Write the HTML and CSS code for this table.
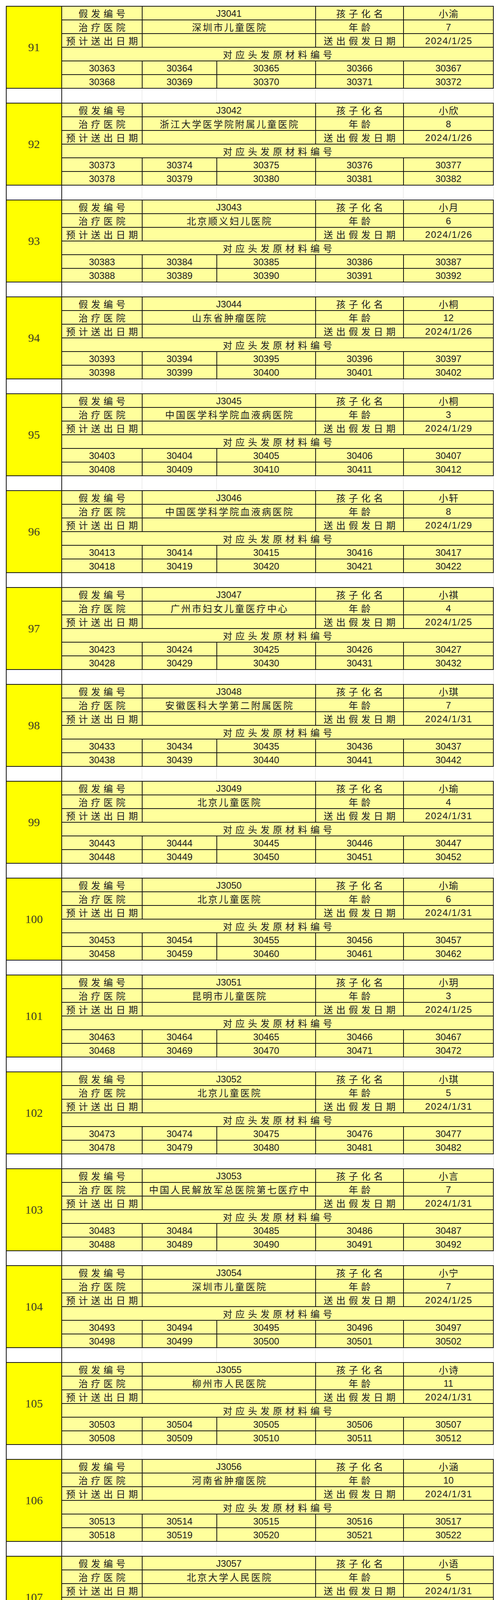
FILE: index.html
```html
<!DOCTYPE html>
<html lang="zh-CN">
<head>
<meta charset="utf-8">
<title>假发编号表</title>
<link rel="stylesheet" href="styles.css">
</head>
<body>
<main class="sheet">

<section class="block">
  <div class="idx">91</div>
  <div class="c lbl">假发编号</div><div class="c num span2">J3041</div><div class="c lbl">孩子化名</div><div class="c name">小渝</div>
  <div class="c lbl">治疗医院</div><div class="c hosp span2">深圳市儿童医院</div><div class="c lbl">年龄</div><div class="c num">7</div>
  <div class="c lbl">预计送出日期</div><div class="c span2"></div><div class="c lbl">送出假发日期</div><div class="c num date">2024/1/25</div>
  <div class="c lbl span5">对应头发原材料编号</div>
  <div class="c num">30363</div><div class="c num">30364</div><div class="c num">30365</div><div class="c num">30366</div><div class="c num">30367</div>
  <div class="c num">30368</div><div class="c num">30369</div><div class="c num">30370</div><div class="c num">30371</div><div class="c num">30372</div>
</section>
<div class="spacer"><i></i><i></i><i></i><i></i><i></i><i></i></div>

<section class="block">
  <div class="idx">92</div>
  <div class="c lbl">假发编号</div><div class="c num span2">J3042</div><div class="c lbl">孩子化名</div><div class="c name">小欣</div>
  <div class="c lbl">治疗医院</div><div class="c hosp span2">浙江大学医学院附属儿童医院</div><div class="c lbl">年龄</div><div class="c num">8</div>
  <div class="c lbl">预计送出日期</div><div class="c span2"></div><div class="c lbl">送出假发日期</div><div class="c num date">2024/1/26</div>
  <div class="c lbl span5">对应头发原材料编号</div>
  <div class="c num">30373</div><div class="c num">30374</div><div class="c num">30375</div><div class="c num">30376</div><div class="c num">30377</div>
  <div class="c num">30378</div><div class="c num">30379</div><div class="c num">30380</div><div class="c num">30381</div><div class="c num">30382</div>
</section>
<div class="spacer"><i></i><i></i><i></i><i></i><i></i><i></i></div>

<section class="block">
  <div class="idx">93</div>
  <div class="c lbl">假发编号</div><div class="c num span2">J3043</div><div class="c lbl">孩子化名</div><div class="c name">小月</div>
  <div class="c lbl">治疗医院</div><div class="c hosp span2">北京顺义妇儿医院</div><div class="c lbl">年龄</div><div class="c num">6</div>
  <div class="c lbl">预计送出日期</div><div class="c span2"></div><div class="c lbl">送出假发日期</div><div class="c num date">2024/1/26</div>
  <div class="c lbl span5">对应头发原材料编号</div>
  <div class="c num">30383</div><div class="c num">30384</div><div class="c num">30385</div><div class="c num">30386</div><div class="c num">30387</div>
  <div class="c num">30388</div><div class="c num">30389</div><div class="c num">30390</div><div class="c num">30391</div><div class="c num">30392</div>
</section>
<div class="spacer"><i></i><i></i><i></i><i></i><i></i><i></i></div>

<section class="block">
  <div class="idx">94</div>
  <div class="c lbl">假发编号</div><div class="c num span2">J3044</div><div class="c lbl">孩子化名</div><div class="c name">小桐</div>
  <div class="c lbl">治疗医院</div><div class="c hosp span2">山东省肿瘤医院</div><div class="c lbl">年龄</div><div class="c num">12</div>
  <div class="c lbl">预计送出日期</div><div class="c span2"></div><div class="c lbl">送出假发日期</div><div class="c num date">2024/1/26</div>
  <div class="c lbl span5">对应头发原材料编号</div>
  <div class="c num">30393</div><div class="c num">30394</div><div class="c num">30395</div><div class="c num">30396</div><div class="c num">30397</div>
  <div class="c num">30398</div><div class="c num">30399</div><div class="c num">30400</div><div class="c num">30401</div><div class="c num">30402</div>
</section>
<div class="spacer"><i></i><i></i><i></i><i></i><i></i><i></i></div>

<section class="block">
  <div class="idx">95</div>
  <div class="c lbl">假发编号</div><div class="c num span2">J3045</div><div class="c lbl">孩子化名</div><div class="c name">小桐</div>
  <div class="c lbl">治疗医院</div><div class="c hosp span2">中国医学科学院血液病医院</div><div class="c lbl">年龄</div><div class="c num">3</div>
  <div class="c lbl">预计送出日期</div><div class="c span2"></div><div class="c lbl">送出假发日期</div><div class="c num date">2024/1/29</div>
  <div class="c lbl span5">对应头发原材料编号</div>
  <div class="c num">30403</div><div class="c num">30404</div><div class="c num">30405</div><div class="c num">30406</div><div class="c num">30407</div>
  <div class="c num">30408</div><div class="c num">30409</div><div class="c num">30410</div><div class="c num">30411</div><div class="c num">30412</div>
</section>
<div class="spacer"><i></i><i></i><i></i><i></i><i></i><i></i></div>

<section class="block">
  <div class="idx">96</div>
  <div class="c lbl">假发编号</div><div class="c num span2">J3046</div><div class="c lbl">孩子化名</div><div class="c name">小轩</div>
  <div class="c lbl">治疗医院</div><div class="c hosp span2">中国医学科学院血液病医院</div><div class="c lbl">年龄</div><div class="c num">8</div>
  <div class="c lbl">预计送出日期</div><div class="c span2"></div><div class="c lbl">送出假发日期</div><div class="c num date">2024/1/29</div>
  <div class="c lbl span5">对应头发原材料编号</div>
  <div class="c num">30413</div><div class="c num">30414</div><div class="c num">30415</div><div class="c num">30416</div><div class="c num">30417</div>
  <div class="c num">30418</div><div class="c num">30419</div><div class="c num">30420</div><div class="c num">30421</div><div class="c num">30422</div>
</section>
<div class="spacer"><i></i><i></i><i></i><i></i><i></i><i></i></div>

<section class="block">
  <div class="idx">97</div>
  <div class="c lbl">假发编号</div><div class="c num span2">J3047</div><div class="c lbl">孩子化名</div><div class="c name">小祺</div>
  <div class="c lbl">治疗医院</div><div class="c hosp span2">广州市妇女儿童医疗中心</div><div class="c lbl">年龄</div><div class="c num">4</div>
  <div class="c lbl">预计送出日期</div><div class="c span2"></div><div class="c lbl">送出假发日期</div><div class="c num date">2024/1/25</div>
  <div class="c lbl span5">对应头发原材料编号</div>
  <div class="c num">30423</div><div class="c num">30424</div><div class="c num">30425</div><div class="c num">30426</div><div class="c num">30427</div>
  <div class="c num">30428</div><div class="c num">30429</div><div class="c num">30430</div><div class="c num">30431</div><div class="c num">30432</div>
</section>
<div class="spacer"><i></i><i></i><i></i><i></i><i></i><i></i></div>

<section class="block">
  <div class="idx">98</div>
  <div class="c lbl">假发编号</div><div class="c num span2">J3048</div><div class="c lbl">孩子化名</div><div class="c name">小琪</div>
  <div class="c lbl">治疗医院</div><div class="c hosp span2">安徽医科大学第二附属医院</div><div class="c lbl">年龄</div><div class="c num">7</div>
  <div class="c lbl">预计送出日期</div><div class="c span2"></div><div class="c lbl">送出假发日期</div><div class="c num date">2024/1/31</div>
  <div class="c lbl span5">对应头发原材料编号</div>
  <div class="c num">30433</div><div class="c num">30434</div><div class="c num">30435</div><div class="c num">30436</div><div class="c num">30437</div>
  <div class="c num">30438</div><div class="c num">30439</div><div class="c num">30440</div><div class="c num">30441</div><div class="c num">30442</div>
</section>
<div class="spacer"><i></i><i></i><i></i><i></i><i></i><i></i></div>

<section class="block">
  <div class="idx">99</div>
  <div class="c lbl">假发编号</div><div class="c num span2">J3049</div><div class="c lbl">孩子化名</div><div class="c name">小瑜</div>
  <div class="c lbl">治疗医院</div><div class="c hosp span2">北京儿童医院</div><div class="c lbl">年龄</div><div class="c num">4</div>
  <div class="c lbl">预计送出日期</div><div class="c span2"></div><div class="c lbl">送出假发日期</div><div class="c num date">2024/1/31</div>
  <div class="c lbl span5">对应头发原材料编号</div>
  <div class="c num">30443</div><div class="c num">30444</div><div class="c num">30445</div><div class="c num">30446</div><div class="c num">30447</div>
  <div class="c num">30448</div><div class="c num">30449</div><div class="c num">30450</div><div class="c num">30451</div><div class="c num">30452</div>
</section>
<div class="spacer"><i></i><i></i><i></i><i></i><i></i><i></i></div>

<section class="block">
  <div class="idx">100</div>
  <div class="c lbl">假发编号</div><div class="c num span2">J3050</div><div class="c lbl">孩子化名</div><div class="c name">小瑜</div>
  <div class="c lbl">治疗医院</div><div class="c hosp span2">北京儿童医院</div><div class="c lbl">年龄</div><div class="c num">6</div>
  <div class="c lbl">预计送出日期</div><div class="c span2"></div><div class="c lbl">送出假发日期</div><div class="c num date">2024/1/31</div>
  <div class="c lbl span5">对应头发原材料编号</div>
  <div class="c num">30453</div><div class="c num">30454</div><div class="c num">30455</div><div class="c num">30456</div><div class="c num">30457</div>
  <div class="c num">30458</div><div class="c num">30459</div><div class="c num">30460</div><div class="c num">30461</div><div class="c num">30462</div>
</section>
<div class="spacer"><i></i><i></i><i></i><i></i><i></i><i></i></div>

<section class="block">
  <div class="idx">101</div>
  <div class="c lbl">假发编号</div><div class="c num span2">J3051</div><div class="c lbl">孩子化名</div><div class="c name">小玥</div>
  <div class="c lbl">治疗医院</div><div class="c hosp span2">昆明市儿童医院</div><div class="c lbl">年龄</div><div class="c num">3</div>
  <div class="c lbl">预计送出日期</div><div class="c span2"></div><div class="c lbl">送出假发日期</div><div class="c num date">2024/1/25</div>
  <div class="c lbl span5">对应头发原材料编号</div>
  <div class="c num">30463</div><div class="c num">30464</div><div class="c num">30465</div><div class="c num">30466</div><div class="c num">30467</div>
  <div class="c num">30468</div><div class="c num">30469</div><div class="c num">30470</div><div class="c num">30471</div><div class="c num">30472</div>
</section>
<div class="spacer"><i></i><i></i><i></i><i></i><i></i><i></i></div>

<section class="block">
  <div class="idx">102</div>
  <div class="c lbl">假发编号</div><div class="c num span2">J3052</div><div class="c lbl">孩子化名</div><div class="c name">小琪</div>
  <div class="c lbl">治疗医院</div><div class="c hosp span2">北京儿童医院</div><div class="c lbl">年龄</div><div class="c num">5</div>
  <div class="c lbl">预计送出日期</div><div class="c span2"></div><div class="c lbl">送出假发日期</div><div class="c num date">2024/1/31</div>
  <div class="c lbl span5">对应头发原材料编号</div>
  <div class="c num">30473</div><div class="c num">30474</div><div class="c num">30475</div><div class="c num">30476</div><div class="c num">30477</div>
  <div class="c num">30478</div><div class="c num">30479</div><div class="c num">30480</div><div class="c num">30481</div><div class="c num">30482</div>
</section>
<div class="spacer"><i></i><i></i><i></i><i></i><i></i><i></i></div>

<section class="block">
  <div class="idx">103</div>
  <div class="c lbl">假发编号</div><div class="c num span2">J3053</div><div class="c lbl">孩子化名</div><div class="c name">小言</div>
  <div class="c lbl">治疗医院</div><div class="c hosp span2">中国人民解放军总医院第七医疗中</div><div class="c lbl">年龄</div><div class="c num">7</div>
  <div class="c lbl">预计送出日期</div><div class="c span2"></div><div class="c lbl">送出假发日期</div><div class="c num date">2024/1/31</div>
  <div class="c lbl span5">对应头发原材料编号</div>
  <div class="c num">30483</div><div class="c num">30484</div><div class="c num">30485</div><div class="c num">30486</div><div class="c num">30487</div>
  <div class="c num">30488</div><div class="c num">30489</div><div class="c num">30490</div><div class="c num">30491</div><div class="c num">30492</div>
</section>
<div class="spacer"><i></i><i></i><i></i><i></i><i></i><i></i></div>

<section class="block">
  <div class="idx">104</div>
  <div class="c lbl">假发编号</div><div class="c num span2">J3054</div><div class="c lbl">孩子化名</div><div class="c name">小宁</div>
  <div class="c lbl">治疗医院</div><div class="c hosp span2">深圳市儿童医院</div><div class="c lbl">年龄</div><div class="c num">7</div>
  <div class="c lbl">预计送出日期</div><div class="c span2"></div><div class="c lbl">送出假发日期</div><div class="c num date">2024/1/25</div>
  <div class="c lbl span5">对应头发原材料编号</div>
  <div class="c num">30493</div><div class="c num">30494</div><div class="c num">30495</div><div class="c num">30496</div><div class="c num">30497</div>
  <div class="c num">30498</div><div class="c num">30499</div><div class="c num">30500</div><div class="c num">30501</div><div class="c num">30502</div>
</section>
<div class="spacer"><i></i><i></i><i></i><i></i><i></i><i></i></div>

<section class="block">
  <div class="idx">105</div>
  <div class="c lbl">假发编号</div><div class="c num span2">J3055</div><div class="c lbl">孩子化名</div><div class="c name">小诗</div>
  <div class="c lbl">治疗医院</div><div class="c hosp span2">柳州市人民医院</div><div class="c lbl">年龄</div><div class="c num">11</div>
  <div class="c lbl">预计送出日期</div><div class="c span2"></div><div class="c lbl">送出假发日期</div><div class="c num date">2024/1/31</div>
  <div class="c lbl span5">对应头发原材料编号</div>
  <div class="c num">30503</div><div class="c num">30504</div><div class="c num">30505</div><div class="c num">30506</div><div class="c num">30507</div>
  <div class="c num">30508</div><div class="c num">30509</div><div class="c num">30510</div><div class="c num">30511</div><div class="c num">30512</div>
</section>
<div class="spacer"><i></i><i></i><i></i><i></i><i></i><i></i></div>

<section class="block">
  <div class="idx">106</div>
  <div class="c lbl">假发编号</div><div class="c num span2">J3056</div><div class="c lbl">孩子化名</div><div class="c name">小涵</div>
  <div class="c lbl">治疗医院</div><div class="c hosp span2">河南省肿瘤医院</div><div class="c lbl">年龄</div><div class="c num">10</div>
  <div class="c lbl">预计送出日期</div><div class="c span2"></div><div class="c lbl">送出假发日期</div><div class="c num date">2024/1/31</div>
  <div class="c lbl span5">对应头发原材料编号</div>
  <div class="c num">30513</div><div class="c num">30514</div><div class="c num">30515</div><div class="c num">30516</div><div class="c num">30517</div>
  <div class="c num">30518</div><div class="c num">30519</div><div class="c num">30520</div><div class="c num">30521</div><div class="c num">30522</div>
</section>
<div class="spacer"><i></i><i></i><i></i><i></i><i></i><i></i></div>

<section class="block">
  <div class="idx">107</div>
  <div class="c lbl">假发编号</div><div class="c num span2">J3057</div><div class="c lbl">孩子化名</div><div class="c name">小语</div>
  <div class="c lbl">治疗医院</div><div class="c hosp span2">北京大学人民医院</div><div class="c lbl">年龄</div><div class="c num">5</div>
  <div class="c lbl">预计送出日期</div><div class="c span2"></div><div class="c lbl">送出假发日期</div><div class="c num date">2024/1/31</div>
  <div class="c lbl span5">对应头发原材料编号</div>
  <div class="c num">30523</div><div class="c num">30524</div><div class="c num">30525</div><div class="c num">30526</div><div class="c num">30527</div>
  <div class="c num">30528</div><div class="c num">30529</div><div class="c num">30530</div><div class="c num">30531</div><div class="c num">30532</div>
</section>
<div class="spacer"><i></i><i></i><i></i><i></i><i></i><i></i></div>

<section class="block">
  <div class="idx">108</div>
  <div class="c lbl">假发编号</div><div class="c num span2">J3058</div><div class="c lbl">孩子化名</div><div class="c name">小颖</div>
  <div class="c lbl">治疗医院</div><div class="c hosp span2">北京儿童医院</div><div class="c lbl">年龄</div><div class="c num">7</div>
  <div class="c lbl">预计送出日期</div><div class="c span2"></div><div class="c lbl">送出假发日期</div><div class="c num date">2024/1/31</div>
  <div class="c lbl span5">对应头发原材料编号</div>
  <div class="c num">30533</div><div class="c num">30534</div><div class="c num">30535</div><div class="c num">30536</div><div class="c num">30537</div>
  <div class="c num">30538</div><div class="c num">30539</div><div class="c num">30540</div><div class="c num">30541</div><div class="c num">30542</div>
</section>
<div class="spacer"><i></i><i></i><i></i><i></i><i></i><i></i></div>

<section class="block">
  <div class="idx">109</div>
  <div class="c lbl">假发编号</div><div class="c num span2">J3059</div><div class="c lbl">孩子化名</div><div class="c name">小文</div>
  <div class="c lbl">治疗医院</div><div class="c hosp span2">郑州大学第一附属医院</div><div class="c lbl">年龄</div><div class="c num">14</div>
  <div class="c lbl">预计送出日期</div><div class="c span2"></div><div class="c lbl">送出假发日期</div><div class="c num date">2024/1/31</div>
  <div class="c lbl span5">对应头发原材料编号</div>
  <div class="c num">30543</div><div class="c num">30544</div><div class="c num">30545</div><div class="c num">30546</div><div class="c num">30547</div>
  <div class="c num">30548</div><div class="c num">30549</div><div class="c num">30550</div><div class="c num">30551</div><div class="c num">30552</div>
</section>

</main>
</body>
</html>
```

FILE: styles.css
```css
html, body {
  margin: 0;
  padding: 0;
  background: #ffffff;
}

body {
  font-family: "Noto Sans CJK SC", "Noto Sans", sans-serif;
  color: #1c1c1c;
}

.sheet {
  padding: 15px 0 0 15px;
  width: 1249px;
}

.block {
  display: grid;
  grid-template-columns: 140px 204px 189px 251px 223px 228px;
  grid-template-rows: repeat(6, 33px);
  gap: 2px;
  padding: 2px;
  background: #151515;
  width: 1249px;
  box-sizing: border-box;
}

.idx {
  grid-row: span 6;
  background: #ffff00;
  display: flex;
  align-items: center;
  justify-content: center;
  font-family: "Liberation Serif", "DejaVu Serif", serif;
  font-size: 30px;
  line-height: 34px;
  color: #3a3a2a;
}

.c {
  background: #ffff9c;
  display: flex;
  align-items: flex-end;
  justify-content: center;
  padding-bottom: 4px;
  font-size: 24px;
  line-height: 24px;
  white-space: nowrap;
  min-width: 0;
}

.span2 {
  grid-column: span 2;
}

.span5 {
  grid-column: span 5;
}

.lbl {
  letter-spacing: 8px;
  padding-left: 8px;
}

.hosp {
  letter-spacing: 3.5px;
  padding-left: 3.5px;
}

.name {
  letter-spacing: 2px;
  padding-left: 2px;
}

.num {
  font-family: "Liberation Sans", Arial, sans-serif;
  font-size: 24px;
  padding-bottom: 3px;
}

.date {
  letter-spacing: 1.6px;
  padding-left: 1.6px;
}

.spacer {
  display: grid;
  grid-template-columns: 142px 206px 191px 253px 225px 232px;
  height: 36px;
  width: 1249px;
}

.spacer i {
  display: block;
  border-left: 1px solid #dcdcdc;
}

.spacer i:nth-child(1),
.spacer i:nth-child(2) {
  border-left: 2px solid #151515;
}

.spacer i:last-child {
  border-right: 1px solid #dcdcdc;
}
```
